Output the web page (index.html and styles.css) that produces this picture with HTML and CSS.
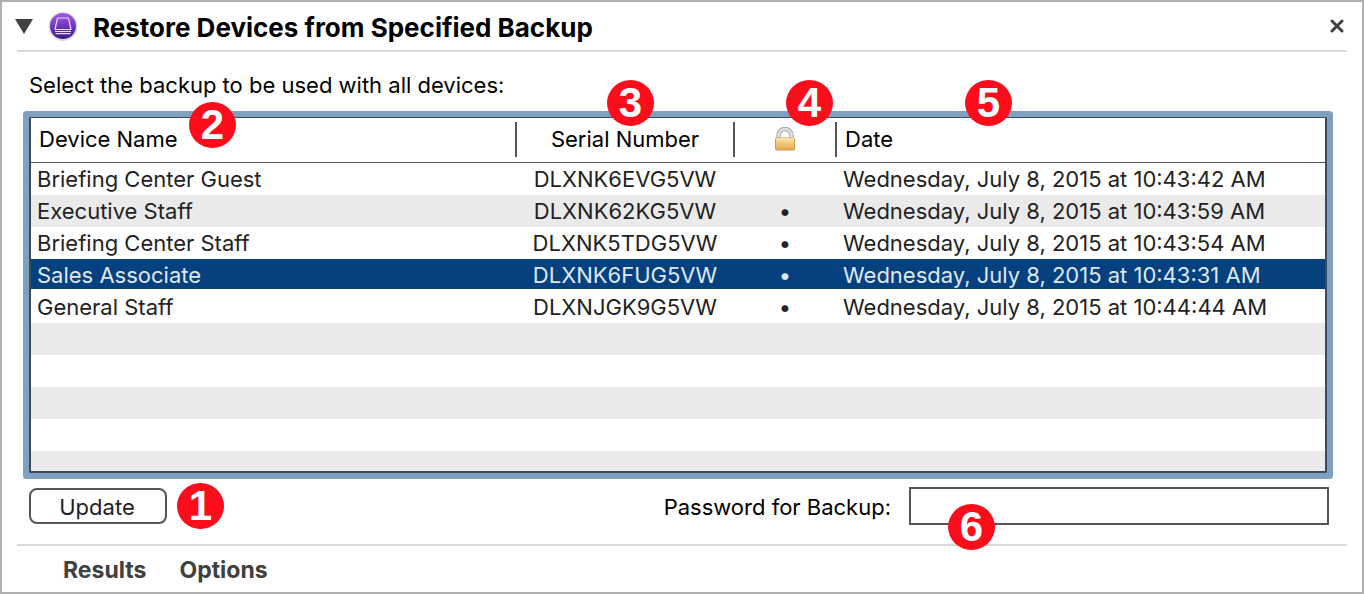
FILE: index.html
```html
<!DOCTYPE html>
<html lang="en">
<head>
  <meta charset="UTF-8" />
  <meta name="viewport" content="width=device-width, initial-scale=1.0"/>
  <title>Restore Devices from Specified Backup</title>
  <link rel="stylesheet" href="styles.css">
</head>
<body>
  <header class="action-header">
    <button class="icon-btn" aria-label="Collapse">
      <svg width="18" height="16" viewBox="0 0 18 16"><path d="M0 1h18L9 16z" fill="#404040"/></svg>
    </button>
    <svg class="app-icon" width="30" height="30" viewBox="0 0 30 30">
      <defs>
        <linearGradient id="purple" x1="0" y1="0" x2="0" y2="1">
          <stop offset="0" stop-color="#a557ee"/>
          <stop offset="1" stop-color="#371a86"/>
        </linearGradient>
      </defs>
      <circle cx="15" cy="15.500" r="14.500" fill="#dcdce0"/>
      <circle cx="15" cy="15" r="13" fill="url(#purple)"/>
      <path d="M10.500 7h9q1 0 1.200 1l2.300 10.500h-16l2.300-10.500q.2-1 1.200-1z" fill="none" stroke="#e8dcff" stroke-width="1.200"/>
      <path d="M7 20.500h16M7.500 22.700h15" fill="none" stroke="#e8dcff" stroke-width="1.200"/>
    </svg>
    <h1>Restore Devices from Specified Backup</h1>
    <button class="icon-btn close" aria-label="Close">
      <svg width="14" height="14" viewBox="0 0 14 14"><path d="M2 2l10 10M12 2L2 12" stroke="#404040" stroke-width="3" stroke-linecap="round"/></svg>
    </button>
  </header>

  <main>
    <p class="prompt">Select the backup to be used with all devices:</p>

    <div class="table-box">
      <table>
        <thead>
          <tr>
            <th class="name"><div>Device Name<span class="badge b2">2</span></div></th>
            <th class="serial"><div>Serial Number<span class="badge b3">3</span></div></th>
            <th class="lock" aria-label="Encrypted">
              <div>
                <svg width="22" height="26" viewBox="0 0 22 26">
                  <defs>
                    <linearGradient id="gold" x1="0" y1="0" x2="0" y2="1">
                      <stop offset="0" stop-color="#fbe2a4"/>
                      <stop offset="1" stop-color="#e3a850"/>
                    </linearGradient>
                  </defs>
                  <path d="M4.500 12V8.500a6.500 6.500 0 0 1 13 0V12" fill="none" stroke="#a4a4a4" stroke-width="4.400"/>
                  <path d="M4.500 12V8.500a6.500 6.500 0 0 1 13 0V12" fill="none" stroke="#e0e0e0" stroke-width="2.600"/>
                  <rect x="1.500" y="11" width="19" height="12" rx="1" fill="url(#gold)" stroke="#cf9d54"/>
                  <path d="M2 12h18" stroke="#fff0c8"/>
                </svg>
                <span class="badge b4">4</span>
              </div>
            </th>
            <th class="date"><div>Date<span class="badge b5">5</span></div></th>
          </tr>
        </thead>
        <tbody>
          <tr><td>Briefing Center Guest</td><td class="mid">DLXNK6EVG5VW</td><td class="mid"></td><td>Wednesday, July 8, 2015 at 10:43:42 AM</td></tr>
          <tr><td>Executive Staff</td><td class="mid">DLXNK62KG5VW</td><td class="mid">•</td><td>Wednesday, July 8, 2015 at 10:43:59 AM</td></tr>
          <tr><td>Briefing Center Staff</td><td class="mid">DLXNK5TDG5VW</td><td class="mid">•</td><td>Wednesday, July 8, 2015 at 10:43:54 AM</td></tr>
          <tr class="selected"><td>Sales Associate</td><td class="mid">DLXNK6FUG5VW</td><td class="mid">•</td><td>Wednesday, July 8, 2015 at 10:43:31 AM</td></tr>
          <tr><td>General Staff</td><td class="mid">DLXNJGK9G5VW</td><td class="mid">•</td><td>Wednesday, July 8, 2015 at 10:44:44 AM</td></tr>
        </tbody>
      </table>
    </div>

    <div class="controls">
      <div class="update-wrap">
        <button class="update">Update</button>
        <span class="badge b1">1</span>
      </div>
      <label for="password">Password for Backup:</label>
      <div class="field">
        <input type="password" id="password">
        <span class="badge b6">6</span>
      </div>
    </div>
  </main>

  <footer>
    <button>Results</button>
    <button>Options</button>
  </footer>
</body>
</html>
```
FILE: styles.css
```css
* { box-sizing: border-box; }
body {
  margin: 0;
  min-height: 100vh;
  display: flex;
  flex-direction: column;
  padding: 0 15px;
  border: 2px solid #b0b0b0;
  background: #fff;
  color: #000;
  font-family: Inter, 'Liberation Sans', sans-serif;
  font-size: 22px;
  line-height: 32px;
}
button, input { font: inherit; }
.action-header {
  display: flex;
  align-items: center;
  height: 50px;
  border-bottom: 2px solid #d8d8d8;
}
.icon-btn {
  display: flex;
  padding: 0;
  border: 0;
  background: none;
}
.icon-btn:first-child { margin-left: -2px; }
.app-icon { margin: 0 15px; }
h1 { margin: 0; padding-top: 4px; font-size: 26px; font-weight: 700; }
.close { margin-left: auto; margin-right: 3px; }
main {
  flex: 1;
  display: flex;
  flex-direction: column;
  padding: 17px 18px 19px 12px;
}
.prompt { margin: 0; }

/* table with focus ring, stripes carry on below the last row */
.table-box {
  flex: 1;
  margin: 16px 2px 0 0;
  border: 2px solid #3d4a5a;
  border-top-width: 1px;
  box-shadow: 0 0 0 6px #819fbf;
  border-radius: 1px;
  background: linear-gradient(#fff 50%, #eaeaea 50%) 0 45px / 100% 64px;
}
table {
  width: 100%;
  table-layout: fixed;
  border-collapse: collapse;
}
th {
  padding: 4px 0 5px;
  background: #fff;
  border-bottom: 1px solid #555;
  font-weight: 400;
  text-align: left;
}
th div {
  position: relative;
  height: 35px;
  line-height: 35px;
  padding-left: 8px;
  border-right: 2px solid #555;
}
th.date div { border-right: 0; }
th.serial div, th.lock div {
  display: flex;
  justify-content: center;
  align-items: center;
  padding: 0;
}
.name { width: 486px; }
.serial { width: 218px; }
.lock { width: 102px; }
td {
  height: 32px;
  padding: 0 6px;
  color: #222;
  white-space: nowrap;
}
td.mid { padding: 0 2px 0 0; text-align: center; }
.selected {
  background: linear-gradient(#05417f 30px, #fff 30px);
}
.selected td { color: #dfe8f2; }

.controls {
  display: flex;
  align-items: center;
  margin-top: 14px;
}
.controls label { padding-top: 2px; }
.update-wrap { position: relative; margin-right: auto; }
.update {
  display: block;
  width: 138px;
  height: 36px;
  padding: 1px 2px 0 0;
  border: 2px solid #555;
  border-radius: 8px;
  background: #fff;
  color: #222;
}
.field { position: relative; margin-left: 18px; }
.field input {
  display: block;
  width: 420px;
  height: 38px;
  padding: 0 8px;
  border: 2px solid #555;
  border-radius: 0;
  background: #fff;
}
footer {
  display: flex;
  gap: 33px;
  height: 48px;
  padding: 8px 46px;
  border-top: 2px solid #d8d8d8;
}
footer button {
  padding: 0;
  border: 0;
  background: none;
  color: #404040;
  font-size: 23px;
  font-weight: 700;
}

/* numbered callouts */
.badge {
  position: absolute;
  width: 47px;
  height: 46px;
  border-radius: 50%;
  background: #fc0d1b;
  color: #fff;
  font-family: 'Liberation Sans', Arial, sans-serif;
  font-size: 42px;
  font-weight: 700;
  line-height: 46px;
  text-align: center;
}
.b1 { left: 148px; top: -5px; }
.b2 { left: 158px; top: -20px; }
.b3 { left: 90px; top: -42px; }
.b4 { left: 51px; top: -42px; }
.b5 { left: 128px; top: -42px; }
.b6 { left: 39px; top: 17px; }
```
